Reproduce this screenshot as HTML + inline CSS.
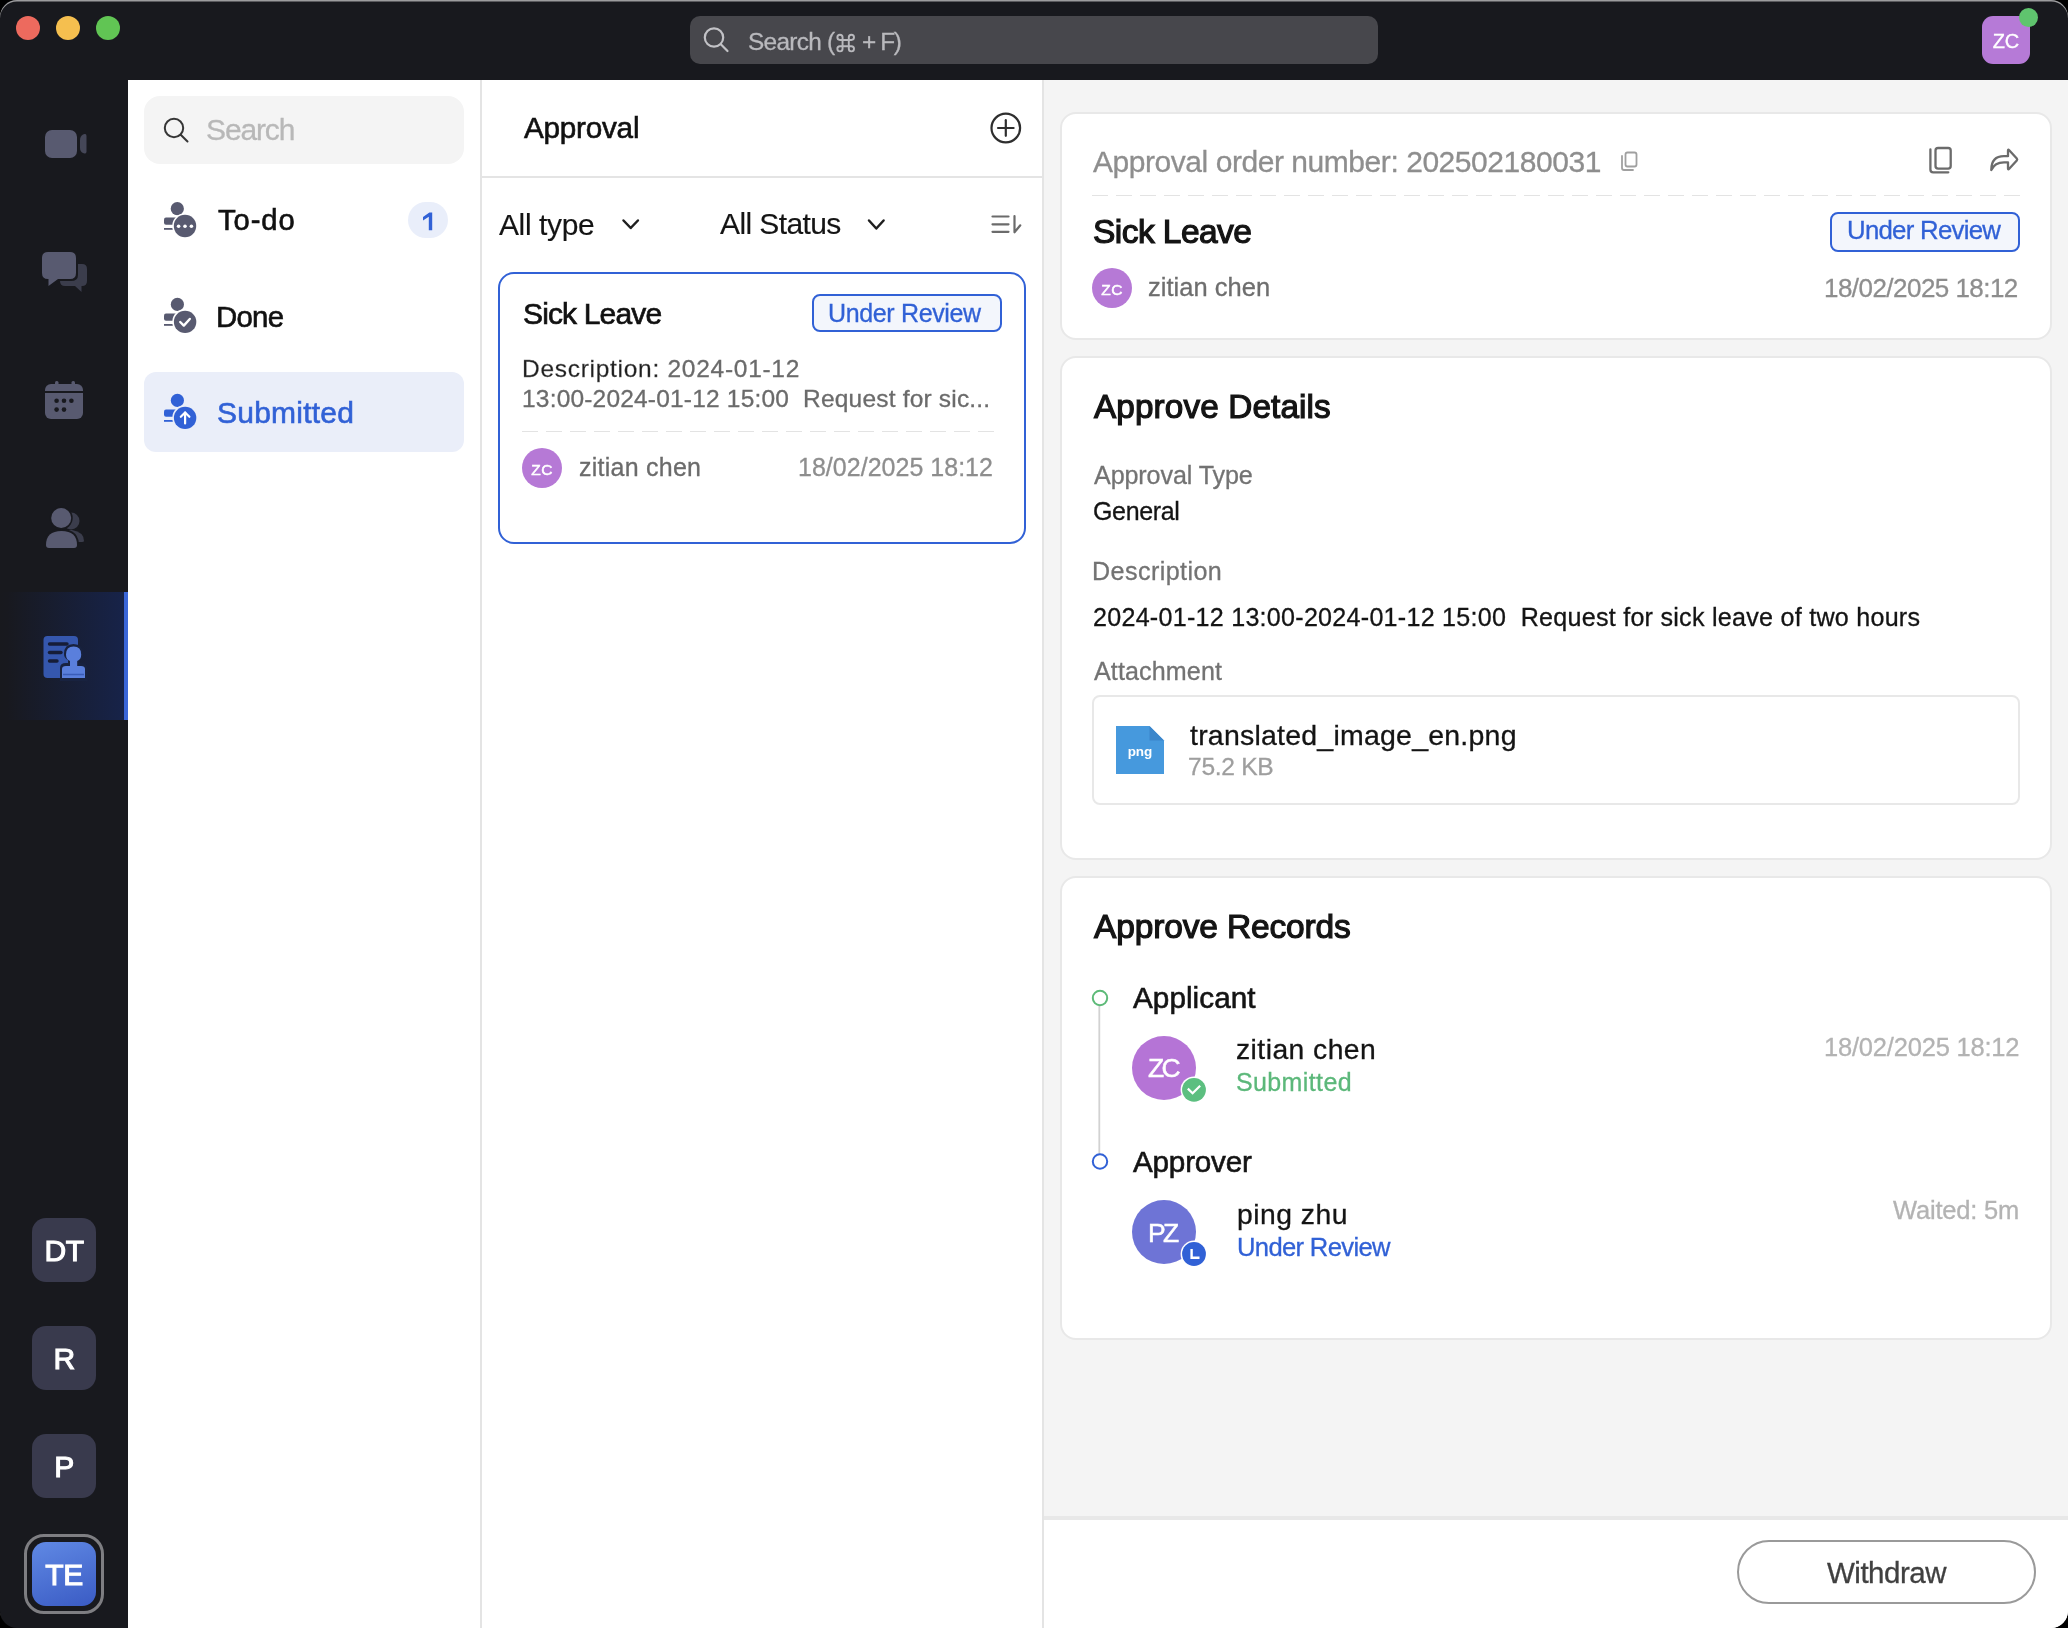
<!DOCTYPE html>
<html><head><meta charset="utf-8">
<style>
*{margin:0;padding:0;box-sizing:border-box}
html,body{width:2068px;height:1628px;overflow:hidden;background:#000}
body{font-family:"Liberation Sans",sans-serif;position:relative;color:#141414}
.a{position:absolute}
#win{position:absolute;left:0;top:0;width:2068px;height:1628px;background:#18191e;border-radius:17px;overflow:hidden}
#winborder{position:absolute;left:0;top:0;width:2068px;height:1628px;border-radius:17px;box-shadow:inset 0 1.5px 0 #9c9c9e;pointer-events:none}
.tl{position:absolute;top:16px;width:24px;height:24px;border-radius:50%}
.t{position:absolute;white-space:nowrap;line-height:1;will-change:transform}
.vline{position:absolute;background:#e4e4e4}
.card{position:absolute;background:#fff;border:2px solid #e8e8e8;border-radius:16px}
.rail{position:absolute;left:32px;width:64px;height:64px;border-radius:14px;background:#393a4d;color:#fff;font-weight:normal;font-size:30px;-webkit-text-stroke:1.1px #fff;letter-spacing:-0.5px;display:flex;align-items:center;justify-content:center;padding-top:2px;will-change:transform}
.badge{position:absolute;border:2px solid #3161d6;border-radius:8px;background:#f3f6fc}
.dash{position:absolute;height:1.5px;background:repeating-linear-gradient(90deg,#e3e3e3 0 16px,transparent 16px 24px)}
svg{position:absolute;left:0;top:0;overflow:visible}
</style></head><body>
<div id="win">
  <div class="tl" style="left:16px;background:#ed6a5e"></div>
  <div class="tl" style="left:56px;background:#f5bf4f"></div>
  <div class="tl" style="left:96px;background:#61c554"></div>
  <div class="a" style="left:690px;top:16px;width:688px;height:48px;background:#47474c;border-radius:10px"></div>
  <div class="a" style="left:1982px;top:16px;width:48px;height:48px;background:#b67ad7;border-radius:11px"></div>
  <div class="t" style="left:1982px;top:31px;width:48px;text-align:center;font-size:20px;color:#fff;-webkit-text-stroke:0.3px #fff">ZC</div>
  <div class="a" style="left:2018.7px;top:8.4px;width:19px;height:19px;background:#5fc46e;border-radius:50%"></div>

  <!-- rail active -->
  <div class="a" style="left:0;top:592px;width:124px;height:128px;background:linear-gradient(90deg,#18191e 0%,#18191f 6%,#172349 100%)"></div>
  <div class="a" style="left:124px;top:592px;width:4px;height:128px;background:#3a66d8"></div>

  <div class="rail" style="top:1218px">DT</div>
  <div class="rail" style="top:1326px">R</div>
  <div class="rail" style="top:1434px">P</div>
  <div class="a" style="left:24px;top:1534px;width:80px;height:80px;border-radius:20px;border:3px solid #7e7e82"></div>
  <div class="rail" style="top:1542px;background:linear-gradient(160deg,#6089e4,#3a5bc4)">TE</div>

  <!-- panels -->
  <div class="a" style="left:128px;top:80px;width:352px;height:1548px;background:#fff"></div>
  <div class="vline" style="left:480px;top:80px;width:2px;height:1548px"></div>
  <div class="a" style="left:482px;top:80px;width:560px;height:1548px;background:#fff"></div>
  <div class="vline" style="left:482px;top:176px;width:560px;height:2px"></div>
  <div class="vline" style="left:1042px;top:80px;width:2px;height:1548px"></div>
  <div class="a" style="left:1044px;top:80px;width:1024px;height:1548px;background:#f4f4f4"></div>

  <!-- nav -->
  <div class="a" style="left:144px;top:96px;width:320px;height:68px;background:#f4f4f4;border-radius:16px"></div>
  <div class="a" style="left:144px;top:372px;width:320px;height:80px;background:#eaeef9;border-radius:12px"></div>
  <div class="a" style="left:408px;top:202px;width:40px;height:36px;background:#e9eefa;border-radius:18px"></div>

  <!-- mid card -->
  <div class="a" style="left:498px;top:272px;width:528px;height:272px;border:2px solid #3161d6;border-radius:16px;background:#fff"></div>
  <div class="badge" style="left:812px;top:294px;width:190px;height:38px"></div>
  <div class="dash" style="left:522px;top:430.5px;width:472px"></div>
  <div class="a" style="left:522px;top:448px;width:40px;height:40px;border-radius:50%;background:#b679d6"></div>
  <div class="t" style="left:522px;top:461.5px;width:40px;text-align:center;font-size:15.5px;color:#fff;-webkit-text-stroke:0.5px #fff;letter-spacing:0.3px">ZC</div>

  <!-- right cards -->
  <div class="card" style="left:1060px;top:112px;width:992px;height:228px"></div>
  <div class="card" style="left:1060px;top:356px;width:992px;height:504px"></div>
  <div class="card" style="left:1060px;top:876px;width:992px;height:464px"></div>
  <div class="dash" style="left:1092px;top:194.5px;width:928px"></div>
  <div class="badge" style="left:1830px;top:212px;width:190px;height:40px"></div>
  <div class="a" style="left:1092px;top:268px;width:40px;height:40px;border-radius:50%;background:#b679d6"></div>
  <div class="t" style="left:1092px;top:281.5px;width:40px;text-align:center;font-size:15.5px;color:#fff;-webkit-text-stroke:0.5px #fff;letter-spacing:0.3px">ZC</div>
  <div class="a" style="left:1092px;top:695px;width:928px;height:110px;border:2px solid #e8e8e8;border-radius:8px"></div>

  <div class="a" style="left:1132px;top:1036px;width:64px;height:64px;border-radius:50%;background:#b574d6"></div>
  <div class="a" style="left:1132px;top:1200px;width:64px;height:64px;border-radius:50%;background:#6e74d6"></div>

  <!-- bottom bar -->
  <div class="a" style="left:1044px;top:1516px;width:1024px;height:4px;background:#e8e8e8"></div>
  <div class="a" style="left:1044px;top:1520px;width:1024px;height:108px;background:#fff"></div>
  <div class="a" style="left:1737px;top:1540px;width:299px;height:64px;border:2px solid #9a9a9a;border-radius:32px"></div>

  <svg width="2068" height="1628" viewBox="0 0 2068 1628">
    <!-- title search icon -->
    <g fill="none" stroke="#c2c2c6" stroke-width="2.2" stroke-linecap="round">
      <circle cx="714" cy="37.5" r="9.2"/>
      <line x1="720.8" y1="44.3" x2="727.5" y2="51"/>
    </g>
    <!-- command key -->
    <g transform="translate(833.2,30.6) scale(1.04)" fill="none" stroke="#b9b9bd" stroke-width="1.85" stroke-linejoin="round">
      <path d="M9 9H15V15H9Z"/>
      <path d="M9 9H6.5A2.5 2.5 0 1 1 9 6.5V9"/>
      <path d="M15 9V6.5A2.5 2.5 0 1 1 17.5 9H15"/>
      <path d="M15 15H17.5A2.5 2.5 0 1 1 15 17.5V15"/>
      <path d="M9 15V17.5A2.5 2.5 0 1 1 6.5 15H9"/>
    </g>
    <!-- rail: video -->
    <rect x="45" y="130" width="32" height="28" rx="7" fill="#585a70"/>
    <path d="M80 140 Q80 136 83 134.5 L84.5 134 Q86.5 133.5 86.5 136 L86.5 151.5 Q86.5 154 84.5 153.5 L83 153 Q80 151.5 80 148 Z" fill="#454758"/>
    <!-- rail: chat -->
    <path d="M66 264 L82 264 Q87 264 87 269 L87 281 Q87 286 82 286 L81.5 286 L81.5 292 L75 286 L65 286 Q60 286 60 281 L60 269 Q60 264 66 264 Z" fill="#3b3d4c"/>
    <path d="M48 250 L71 250 Q78 250 78 257 L78 275 Q78 281 71 281 L59 281 L49 289 L49 281 L48 281 Q40 281 40 274 L40 257 Q40 250 48 250 Z" fill="#18191e"/>
    <path d="M48 252 L70 252 Q76 252 76 258 L76 273 Q76 279 70 279 L58 279 L48.5 286 L48.5 279 L48 279 Q42 279 42 273 L42 258 Q42 252 48 252 Z" fill="#585a70"/>
    <!-- rail: calendar -->
    <rect x="45" y="384" width="38" height="35" rx="6" fill="#585a70"/>
    <rect x="45" y="391" width="38" height="2" fill="#18191e"/>
    <rect x="55" y="381" width="3.5" height="6" rx="1.5" fill="#585a70"/>
    <rect x="71.5" y="381" width="3.5" height="6" rx="1.5" fill="#585a70"/>
    <g fill="#18191e">
      <circle cx="56.6" cy="400.8" r="2.3"/><circle cx="64" cy="400.8" r="2.3"/><circle cx="71.4" cy="400.8" r="2.3"/>
      <circle cx="56.6" cy="409.6" r="2.3"/><circle cx="64" cy="409.6" r="2.3"/>
    </g>
    <!-- rail: contacts -->
    <circle cx="71" cy="521" r="8.5" fill="#3b3d4c"/>
    <path d="M62 530 L72 530 Q84 532 84 541 Q84 542 82 542 L62 542 Z" fill="#3b3d4c"/>
    <circle cx="61.2" cy="518" r="11.5" fill="#18191e"/>
    <circle cx="61.2" cy="518" r="10" fill="#585a70"/>
    <path d="M44 548 Q43 529 61.5 529 Q80 529 79 548 Z" fill="#18191e"/>
    <path d="M46 545 Q46 531 61.5 531 Q77 531 77 545 Q77 548 74 548 L49 548 Q46 548 46 545 Z" fill="#585a70"/>
    <!-- rail: approval active -->
    <rect x="43.5" y="636" width="34.5" height="42" rx="4" fill="#3557ae"/>
    <g stroke="#161d38" stroke-width="3.4" stroke-linecap="round">
      <line x1="49.5" y1="644" x2="67" y2="644"/>
      <line x1="49.5" y1="652.5" x2="61" y2="652.5"/>
      <line x1="49.5" y1="661" x2="57" y2="661"/>
    </g>
    <path d="M60 681 L60 668 Q60 663 66 663 L68 663 L68 660 Q64 658 64 654 Q64 644 73.5 644 Q83 644 83 654 Q83 658 79 660 L79 663 L81 663 Q87.5 663 87.5 668 L87.5 681 Z" fill="#18223f"/>
    <path d="M62 678 L62 669 Q62 666 66 666 L70 666 L70 661 Q66 659.5 66 654.5 Q66 646.5 73.6 646.5 Q81.2 646.5 81.2 654.5 Q81.2 659.5 77.2 661 L77.2 666 L81 666 Q85 666 85 669 L85 678 Z" fill="#5a7fdc"/>
    <line x1="63" y1="674.5" x2="84" y2="674.5" stroke="#3a5cb8" stroke-width="1.5"/>
    <!-- nav search icon -->
    <g fill="none" stroke="#363636" stroke-width="2.0" stroke-linecap="round">
      <circle cx="174" cy="128" r="9.2"/>
      <line x1="180.7" y1="134.7" x2="187.5" y2="141.5"/>
    </g>
    <!-- nav stamp icons -->
    <g id="stampTodo">
      <circle cx="177.3" cy="208.7" r="6.6" fill="#585a70"/>
      <rect x="164" y="217.5" width="24" height="7.2" rx="2" fill="#585a70"/>
      <rect x="164" y="228" width="9" height="1.8" fill="#585a70"/>
      <circle cx="185" cy="226" r="12.8" fill="#fff"/>
      <circle cx="185" cy="226" r="11.2" fill="#585a70"/>
      <circle cx="178.6" cy="226.3" r="1.8" fill="#fff"/><circle cx="185" cy="226.3" r="1.8" fill="#fff"/><circle cx="191.4" cy="226.3" r="1.8" fill="#fff"/>
    </g>
    <g>
      <circle cx="177.4" cy="304.4" r="6.6" fill="#585a70"/>
      <rect x="164" y="313.5" width="24" height="7.2" rx="2" fill="#585a70"/>
      <rect x="164" y="324" width="9" height="1.8" fill="#585a70"/>
      <circle cx="185.1" cy="321.9" r="12.8" fill="#fff"/>
      <circle cx="185.1" cy="321.9" r="11.2" fill="#585a70"/>
      <polyline points="180.2,322 183.8,325.6 189.8,319" fill="none" stroke="#fff" stroke-width="2.4" stroke-linecap="round" stroke-linejoin="round"/>
    </g>
    <g>
      <circle cx="177.4" cy="400.4" r="6.6" fill="#3161d6"/>
      <rect x="164" y="409.5" width="24" height="7.2" rx="2" fill="#3161d6"/>
      <rect x="164" y="420" width="9" height="1.8" fill="#3161d6"/>
      <circle cx="185.1" cy="417.9" r="12.8" fill="#eaeef9"/>
      <circle cx="185.1" cy="417.9" r="11.2" fill="#3161d6"/>
      <g fill="none" stroke="#fff" stroke-width="2.2" stroke-linecap="round" stroke-linejoin="round">
        <line x1="185.1" y1="423.5" x2="185.1" y2="412.5"/>
        <polyline points="180.8,416.8 185.1,412.5 189.4,416.8"/>
      </g>
    </g>
    <path d="M428.8 230.2 L428.8 216.8 L423 220.4 L423 217 L429.4 212.5 L432.2 212.5 L432.2 230.2 Z" fill="#3161d6"/>
    <!-- plus circle -->
    <g fill="none" stroke="#2e2e2e" stroke-width="2.2" stroke-linecap="round">
      <circle cx="1005.8" cy="128" r="14.3"/>
      <line x1="998" y1="128" x2="1013.6" y2="128"/>
      <line x1="1005.8" y1="120.2" x2="1005.8" y2="135.8"/>
    </g>
    <!-- chevrons -->
    <g fill="none" stroke="#1f1f1f" stroke-width="2.5" stroke-linecap="round" stroke-linejoin="round">
      <polyline points="623.5,220.5 630.7,228 637.9,220.5"/>
      <polyline points="869,220.5 876.3,228.5 883.6,220.5"/>
    </g>
    <!-- sort -->
    <g fill="none" stroke="#6b6b6b" stroke-width="2.2" stroke-linecap="round" stroke-linejoin="round">
      <line x1="992.5" y1="216.5" x2="1008.5" y2="216.5"/>
      <line x1="992.5" y1="224.3" x2="1008.5" y2="224.3"/>
      <line x1="992.5" y1="231.8" x2="1008.5" y2="231.8"/>
      <polyline points="1014.5,216 1014.5,232.3 1020.3,225.3"/>
    </g>
    <!-- copy small -->
    <g fill="none" stroke="#a0a0a0" stroke-width="1.8" stroke-linecap="round" stroke-linejoin="round">
      <rect x="1625.5" y="152.5" width="11" height="14" rx="2"/>
      <path d="M1622 156 L1622 168 Q1622 170 1624 170 L1633 170"/>
    </g>
    <!-- copy large -->
    <g fill="none" stroke="#6b6b6b" stroke-width="2.3" stroke-linecap="round" stroke-linejoin="round">
      <rect x="1935.5" y="148" width="15.2" height="20.6" rx="2.6"/>
      <path d="M1930.4 149.5 L1930.4 169.5 Q1930.4 172.3 1933.2 172.3 L1948.3 172.3"/>
    </g>
    <!-- share -->
    <path d="M1991.3 170 C1991.3 161 1996 156.2 2004 156.2 L2008 156.2 L2008 150.5 Q2008 149 2009.2 150.2 L2016.8 158.6 Q2017.6 159.5 2016.8 160.4 L2009.2 168.8 Q2008 170 2008 168.5 L2008 162.3 L2004 162.3 C1998 162.3 1993.5 165 1991.3 170 Z" fill="none" stroke="#6b6b6b" stroke-width="2.3" stroke-linejoin="round" stroke-linecap="round"/>
    <!-- png icon -->
    <path d="M1116 726 L1149.5 726 L1164 740.5 L1164 774 L1116 774 Z" fill="#4699dd"/>
    <path d="M1149.5 726 L1164 740.5 L1149.5 740.5 Z" fill="#3b86cb"/>
    <text x="1140" y="755.5" font-family="Liberation Sans" font-weight="bold" font-size="13.5" fill="#fff" text-anchor="middle">png</text>
    <!-- timeline -->
    <line x1="1099.3" y1="1006" x2="1099.3" y2="1154" stroke="#d2d2d2" stroke-width="1.8"/>
    <circle cx="1100" cy="998" r="7.2" fill="#fff" stroke="#5dba78" stroke-width="2"/>
    <circle cx="1100" cy="1161.5" r="7.2" fill="#fff" stroke="#3161d6" stroke-width="2"/>
    <!-- check badge -->
    <circle cx="1194" cy="1089.8" r="13.4" fill="#fff"/>
    <circle cx="1194" cy="1089.8" r="11.9" fill="#5cbf80"/>
    <polyline points="1188.6,1089.4 1192.6,1093.3 1199.4,1086.5" fill="none" stroke="#fff" stroke-width="2.2" stroke-linecap="square" stroke-linejoin="miter"/>
    <!-- clock badge -->
    <circle cx="1194" cy="1254" r="13.4" fill="#fff"/>
    <circle cx="1194" cy="1254" r="11.9" fill="#3161d6"/>
    <polyline points="1191.6,1250.2 1191.6,1257.8 1198.3,1257.8" fill="none" stroke="#fff" stroke-width="2.4" stroke-linecap="square" stroke-linejoin="miter"/>
  </svg>

<div class="t" style="left:747.8px;top:29.5px;font-size:24.4px;font-weight:400;color:#b9b9bd;letter-spacing:-0.71px;-webkit-text-stroke:0.3px #b9b9bd;">Search (</div>
<div class="t" style="left:862.0px;top:29.5px;font-size:24.4px;font-weight:400;color:#b9b9bd;letter-spacing:-1.37px;-webkit-text-stroke:0.3px #b9b9bd;">+ F)</div>
<div class="t" style="left:206.2px;top:114.5px;font-size:30px;font-weight:400;color:#b8b8b8;letter-spacing:-1.13px;-webkit-text-stroke:0.3px #b8b8b8;">Search</div>
<div class="t" style="left:217.5px;top:206.0px;font-size:29.2px;font-weight:400;color:#111111;letter-spacing:0.91px;-webkit-text-stroke:0.6px #111111;">To-do</div>
<div class="t" style="left:216.3px;top:302.2px;font-size:29.4px;font-weight:400;color:#111111;letter-spacing:-0.74px;-webkit-text-stroke:0.6px #111111;">Done</div>
<div class="t" style="left:216.5px;top:397.5px;font-size:30px;font-weight:400;color:#3161d6;letter-spacing:0.23px;-webkit-text-stroke:0.6px #3161d6;">Submitted</div>
<div class="t" style="left:523.6px;top:112.9px;font-size:29.7px;font-weight:400;color:#111111;letter-spacing:-0.24px;-webkit-text-stroke:0.6px #111111;">Approval</div>
<div class="t" style="left:499.2px;top:209.6px;font-size:30px;font-weight:400;color:#141414;letter-spacing:-0.39px;-webkit-text-stroke:0.15px #141414;">All type</div>
<div class="t" style="left:719.5px;top:209.3px;font-size:30px;font-weight:400;color:#141414;letter-spacing:-0.60px;-webkit-text-stroke:0.15px #141414;">All Status</div>
<div class="t" style="left:522.6px;top:299.0px;font-size:30px;font-weight:400;color:#111111;letter-spacing:-0.85px;-webkit-text-stroke:0.7px #111111;">Sick Leave</div>
<div class="t" style="left:828.4px;top:300.8px;font-size:25px;font-weight:400;color:#3161d6;letter-spacing:-0.35px;-webkit-text-stroke:0.3px #3161d6;">Under Review</div>
<div class="t" style="left:521.5px;top:356.8px;font-size:24.5px;font-weight:400;color:#6b6b6b;letter-spacing:0.72px;-webkit-text-stroke:0.3px #6b6b6b;"><span style="color:#1f1f1f">Description:</span> 2024-01-12</div>
<div class="t" style="left:521.8px;top:387.0px;font-size:24.5px;font-weight:400;color:#6b6b6b;letter-spacing:0.19px;-webkit-text-stroke:0.3px #6b6b6b;">13:00-2024-01-12 15:00&nbsp; Request for sic...</div>
<div class="t" style="left:578.5px;top:455.4px;font-size:25px;font-weight:400;color:#6b6b6b;letter-spacing:0.25px;-webkit-text-stroke:0.3px #6b6b6b;">zitian chen</div>
<div class="t" style="left:798.0px;top:455.4px;font-size:25px;font-weight:400;color:#8e8e8e;letter-spacing:0.02px;-webkit-text-stroke:0.3px #8e8e8e;">18/02/2025 18:12</div>
<div class="t" style="left:1093.2px;top:146.5px;font-size:30px;font-weight:400;color:#8e8e8e;letter-spacing:-0.45px;-webkit-text-stroke:0.3px #8e8e8e;">Approval order number: 202502180031</div>
<div class="t" style="left:1092.9px;top:214.6px;font-size:33.5px;font-weight:400;color:#141414;letter-spacing:-0.55px;-webkit-text-stroke:1.2px #141414;">Sick Leave</div>
<div class="t" style="left:1846.7px;top:218.4px;font-size:25.8px;font-weight:400;color:#3161d6;letter-spacing:-0.74px;-webkit-text-stroke:0.3px #3161d6;">Under Review</div>
<div class="t" style="left:1148.2px;top:275.1px;font-size:25.5px;font-weight:400;color:#6e6e6e;letter-spacing:0.03px;-webkit-text-stroke:0.3px #6e6e6e;">zitian chen</div>
<div class="t" style="left:1824.2px;top:275.3px;font-size:26px;font-weight:400;color:#8e8e8e;letter-spacing:-0.54px;-webkit-text-stroke:0.3px #8e8e8e;">18/02/2025 18:12</div>
<div class="t" style="left:1094.0px;top:390.0px;font-size:33.3px;font-weight:400;color:#141414;letter-spacing:0.12px;-webkit-text-stroke:1.2px #141414;">Approve Details</div>
<div class="t" style="left:1093.6px;top:462.5px;font-size:25.1px;font-weight:400;color:#737373;letter-spacing:-0.10px;-webkit-text-stroke:0.3px #737373;">Approval Type</div>
<div class="t" style="left:1092.6px;top:498.8px;font-size:25px;font-weight:400;color:#141414;letter-spacing:-0.36px;-webkit-text-stroke:0.3px #141414;">General</div>
<div class="t" style="left:1091.6px;top:558.9px;font-size:25.1px;font-weight:400;color:#737373;letter-spacing:0.43px;-webkit-text-stroke:0.3px #737373;">Description</div>
<div class="t" style="left:1092.6px;top:604.5px;font-size:25.1px;font-weight:400;color:#141414;letter-spacing:0.26px;-webkit-text-stroke:0.3px #141414;">2024-01-12 13:00-2024-01-12 15:00&nbsp; Request for sick leave of two hours</div>
<div class="t" style="left:1093.6px;top:658.9px;font-size:25.1px;font-weight:400;color:#737373;letter-spacing:0.11px;-webkit-text-stroke:0.3px #737373;">Attachment</div>
<div class="t" style="left:1189.7px;top:721.3px;font-size:28.5px;font-weight:400;color:#141414;letter-spacing:0.22px;-webkit-text-stroke:0.3px #141414;">translated_image_en.png</div>
<div class="t" style="left:1188.2px;top:754.8px;font-size:24.6px;font-weight:400;color:#9e9e9e;letter-spacing:-0.30px;-webkit-text-stroke:0.3px #9e9e9e;">75.2 KB</div>
<div class="t" style="left:1093.8px;top:910.1px;font-size:33.5px;font-weight:400;color:#141414;letter-spacing:-0.14px;-webkit-text-stroke:1.2px #141414;">Approve Records</div>
<div class="t" style="left:1133.2px;top:983.3px;font-size:29.7px;font-weight:400;color:#141414;letter-spacing:0.05px;-webkit-text-stroke:0.6px #141414;">Applicant</div>
<div class="t" style="left:1148.0px;top:1055.1px;font-size:26.5px;font-weight:400;color:#ffffff;letter-spacing:-2.79px;-webkit-text-stroke:0.5px #ffffff;">ZC</div>
<div class="t" style="left:1236.2px;top:1035.4px;font-size:28.3px;font-weight:400;color:#141414;letter-spacing:0.45px;-webkit-text-stroke:0.3px #141414;">zitian chen</div>
<div class="t" style="left:1236.2px;top:1070.2px;font-size:25px;font-weight:400;color:#5cb87a;letter-spacing:0.38px;-webkit-text-stroke:0.3px #5cb87a;">Submitted</div>
<div class="t" style="left:1824.2px;top:1034.5px;font-size:25.5px;font-weight:400;color:#b3b3b3;letter-spacing:-0.20px;-webkit-text-stroke:0.3px #b3b3b3;">18/02/2025 18:12</div>
<div class="t" style="left:1133.3px;top:1147.1px;font-size:29.7px;font-weight:400;color:#141414;letter-spacing:-0.22px;-webkit-text-stroke:0.6px #141414;">Approver</div>
<div class="t" style="left:1147.7px;top:1219.5px;font-size:26.5px;font-weight:400;color:#ffffff;letter-spacing:-2.58px;-webkit-text-stroke:0.5px #ffffff;">PZ</div>
<div class="t" style="left:1236.7px;top:1199.8px;font-size:28.3px;font-weight:400;color:#141414;letter-spacing:0.49px;-webkit-text-stroke:0.3px #141414;">ping zhu</div>
<div class="t" style="left:1236.7px;top:1235.2px;font-size:25.6px;font-weight:400;color:#3161d6;letter-spacing:-0.66px;-webkit-text-stroke:0.3px #3161d6;">Under Review</div>
<div class="t" style="left:1893.4px;top:1198.3px;font-size:25.5px;font-weight:400;color:#b3b3b3;letter-spacing:-0.19px;-webkit-text-stroke:0.3px #b3b3b3;">Waited: 5m</div>
<div class="t" style="left:1826.5px;top:1557.9px;font-size:29.5px;font-weight:400;color:#404040;letter-spacing:-0.49px;-webkit-text-stroke:0.3px #404040;">Withdraw</div>
</div>
<div id="winborder"></div>
</body></html>
